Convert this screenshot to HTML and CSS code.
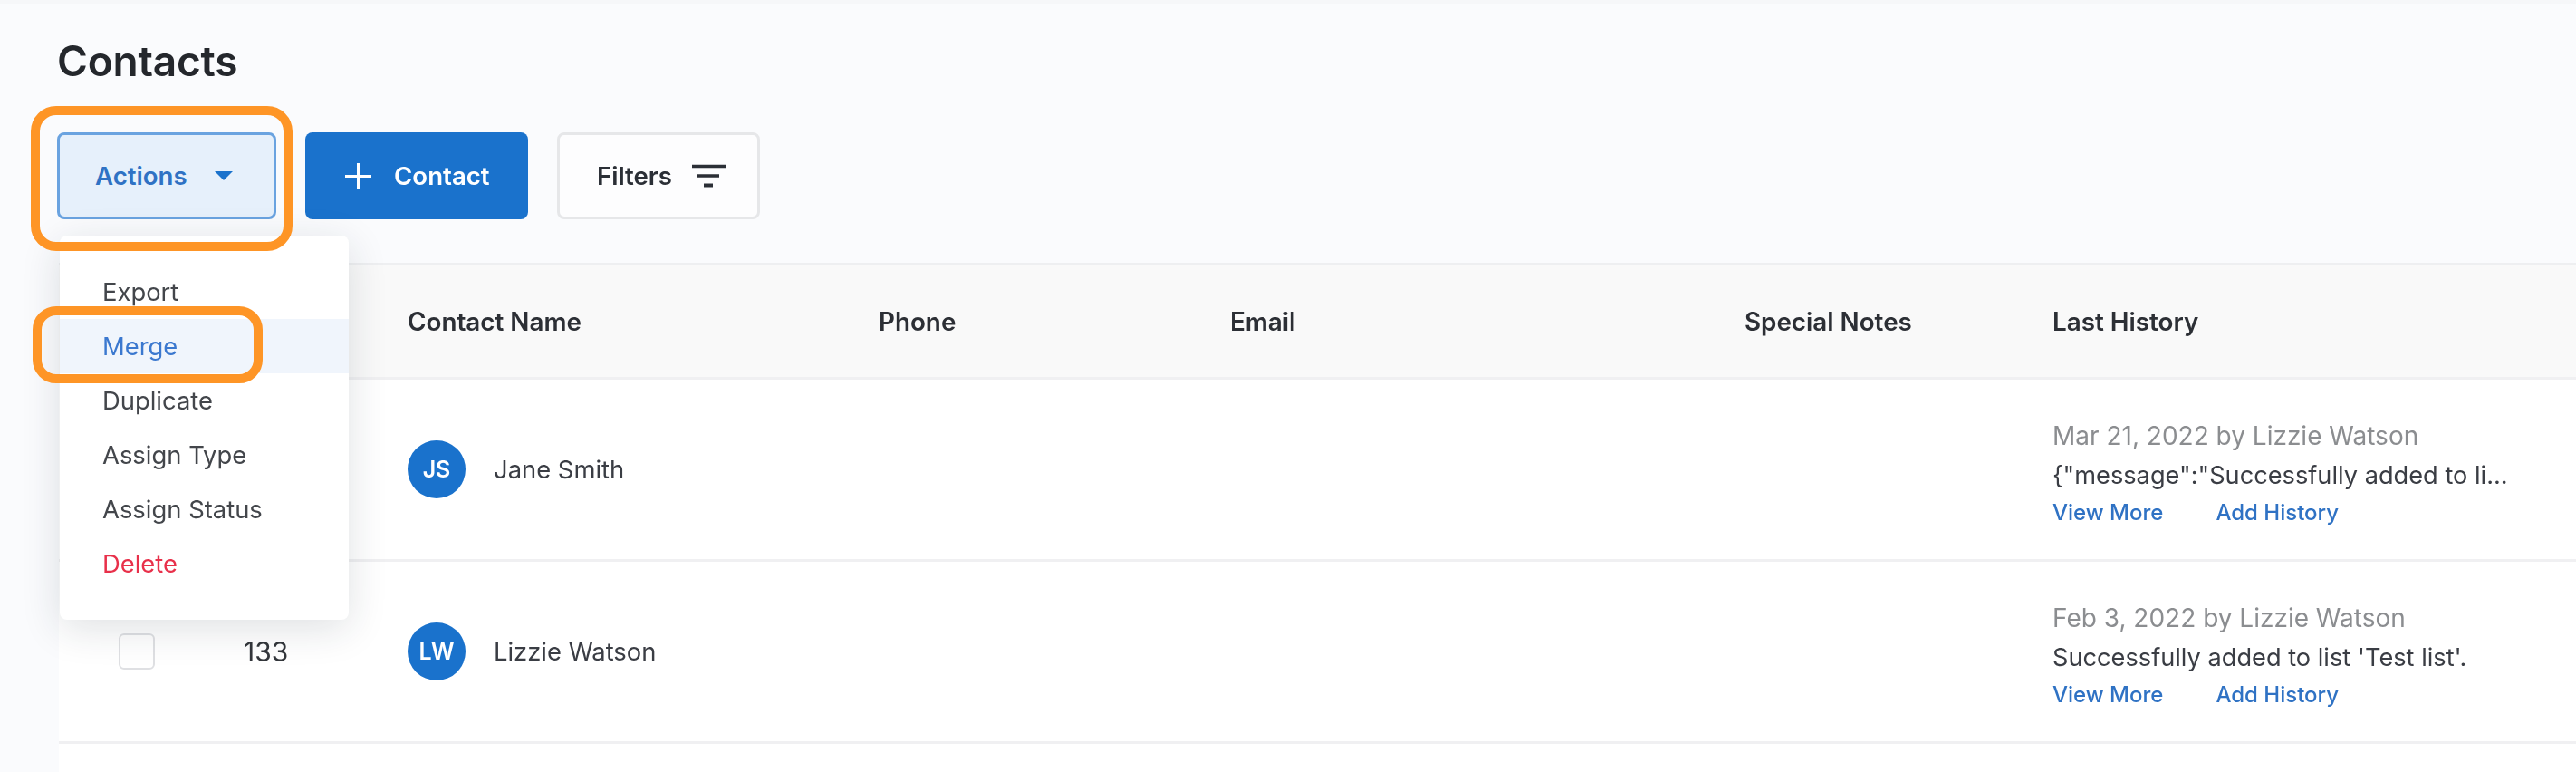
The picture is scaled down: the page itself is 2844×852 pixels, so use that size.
FILE: index.html
```html
<!DOCTYPE html>
<html lang="en">
<head>
<meta charset="utf-8">
<title>Contacts</title>
<link rel="stylesheet" href="styles.css">
</head>
<body>
<div class="page">
  <div class="top-strip"></div>
  <h1 class="title">Contacts</h1>
  <div class="toolbar">
    <div class="actions-wrap">
      <button class="btn btn-actions">Actions <span class="caret"></span></button>
      <ul class="menu">
        <li class="menu-item">Export</li>
        <li class="menu-item is-active">Merge</li>
        <li class="menu-item">Duplicate</li>
        <li class="menu-item">Assign Type</li>
        <li class="menu-item">Assign Status</li>
        <li class="menu-item is-danger">Delete</li>
      </ul>
      <div class="ring ring-actions"></div>
      <div class="ring ring-merge"></div>
    </div>
    <button class="btn btn-contact">
      <svg class="plus" width="29" height="29" viewBox="0 0 29 29"><path d="M14.5 0v29M0 14.5h29" stroke="#fff" stroke-width="3" fill="none"/></svg>
      Contact
    </button>
    <button class="btn btn-filters">Filters
      <svg width="37" height="26" viewBox="0 0 37 26"><path d="M0 2.5h37M6 13h24" stroke="#2b2f36" stroke-width="3.4" fill="none"/><path d="M13 23.5h10" stroke="#2b2f36" stroke-width="4" fill="none"/></svg>
    </button>
  </div>
  <div class="table">
    <div class="row row-head">
      <div></div><div></div>
      <div>Contact Name</div>
      <div>Phone</div>
      <div>Email</div>
      <div>Special Notes</div>
      <div>Last History</div>
    </div>
    <div class="row">
      <div></div><div></div>
      <div class="contact"><span class="avatar">JS</span>Jane Smith</div>
      <div></div><div></div><div></div>
      <div class="history">
        <div class="hist-date">Mar 21, 2022 by Lizzie Watson</div>
        <div class="hist-msg">{"message":"Successfully added to li...</div>
        <div class="hist-links"><a>View More</a><a>Add History</a></div>
      </div>
    </div>
    <div class="row">
      <div><span class="checkbox"></span></div>
      <div class="num">133</div>
      <div class="contact"><span class="avatar">LW</span>Lizzie Watson</div>
      <div></div><div></div><div></div>
      <div class="history">
        <div class="hist-date">Feb 3, 2022 by Lizzie Watson</div>
        <div class="hist-msg">Successfully added to list 'Test list'.</div>
        <div class="hist-links"><a>View More</a><a>Add History</a></div>
      </div>
    </div>
  </div>
</div>
</body>
</html>
```
FILE: styles.css
```css
* { box-sizing: border-box; }
html, body { margin: 0; height: 100%; overflow: hidden; }
body {
  background: #fafbfd;
  color: #33363b;
  font-family: Inter, "Liberation Sans", sans-serif;
  font-size: 27.4px;
}
.page { height: 852px; padding-left: 63px; filter: blur(0.7px); }
.top-strip { height: 4px; margin-left: -63px; background: #f6f7f9; }
.title {
  margin: 36px 0 0;
  font-size: 46px;
  line-height: 54px;
  font-weight: 600;
  color: #24272c;
  letter-spacing: -0.2px;
}
.toolbar { display: flex; gap: 32px; margin-top: 52px; height: 96px; }
.actions-wrap { position: relative; }
.btn {
  height: 96px;
  border-radius: 8px;
  font: 600 27.6px Inter, "Liberation Sans", sans-serif;
  display: flex;
  align-items: center;
  padding: 0;
  cursor: pointer;
}
.btn-actions {
  width: 242px;
  background: #e6f0fb;
  border: 3px solid #6aa3e0;
  color: #2f72c4;
  padding-left: 39px;
  gap: 30px;
}
.caret {
  width: 0;
  height: 0;
  border-left: 10px solid transparent;
  border-right: 10px solid transparent;
  border-top: 10px solid #1a72cc;
}
.btn-contact {
  width: 246px;
  background: #1a72cc;
  border: 0;
  color: #fff;
  padding-left: 44px;
  gap: 25px;
}
.btn-filters {
  width: 224px;
  background: #fdfdfe;
  border: 3px solid #e6e7e9;
  color: #2b2f36;
  padding-left: 41px;
  gap: 22px;
}
.menu {
  position: absolute;
  z-index: 3;
  left: 3px;
  top: 114px;
  width: 319px;
  margin: 0;
  padding: 32px 0;
  list-style: none;
  background: #fff;
  border-radius: 8px;
  box-shadow: 0 10px 44px rgba(30, 40, 60, 0.14);
}
.menu-item { height: 60px; line-height: 61px; padding-left: 47px; color: #43464b; }
.is-active { background: #f0f5fc; color: #3b78cf; }
.is-danger { color: #e8304a; }
.ring {
  position: absolute;
  z-index: 4;
  border: 10px solid #fe9526;
  pointer-events: none;
}
.ring-actions { left: -29px; top: -29px; width: 289px; height: 160px; border-radius: 28px; }
.ring-merge { left: -27px; top: 192px; width: 254px; height: 85px; border-radius: 26px; }
.table {
  margin: 48px 0 0 2px;
  background: #fff;
  height: 562px;
  border-top: 3px solid #eeeff1;
}
.row {
  display: grid;
  grid-template-columns: 204px 181px 520px 388px 568px 340px 1fr;
  align-items: center;
  height: 201px;
  border-bottom: 3px solid #f0f0f2;
}
.row > div:first-child { padding-left: 66px; }
.row-head {
  height: 126px;
  background: #f9f9f9;
  font-weight: 600;
  font-size: 27.8px;
  color: #2c2f35;
}
.checkbox {
  display: block;
  width: 40px;
  height: 40px;
  border: 2px solid #dfe0e3;
  border-radius: 6px;
  background: #fff;
}
.num { font-size: 30px; }
.contact { display: flex; align-items: center; gap: 31px; color: #3a3d44; }
.avatar {
  width: 64px;
  height: 64px;
  border-radius: 50%;
  background: #1a72cc;
  color: #fff;
  font-size: 25px;
  font-weight: 600;
  display: flex;
  align-items: center;
  justify-content: center;
}
.history { display: flex; flex-direction: column; padding-top: 8px; }
.hist-date { color: #8b8d90; font-size: 28px; line-height: 44px; }
.hist-msg { color: #3a3d44; font-size: 27.2px; line-height: 44px; }
.hist-links { display: flex; gap: 58px; line-height: 38px; font-size: 24px; font-weight: 500; color: #2f72c4; }
```
